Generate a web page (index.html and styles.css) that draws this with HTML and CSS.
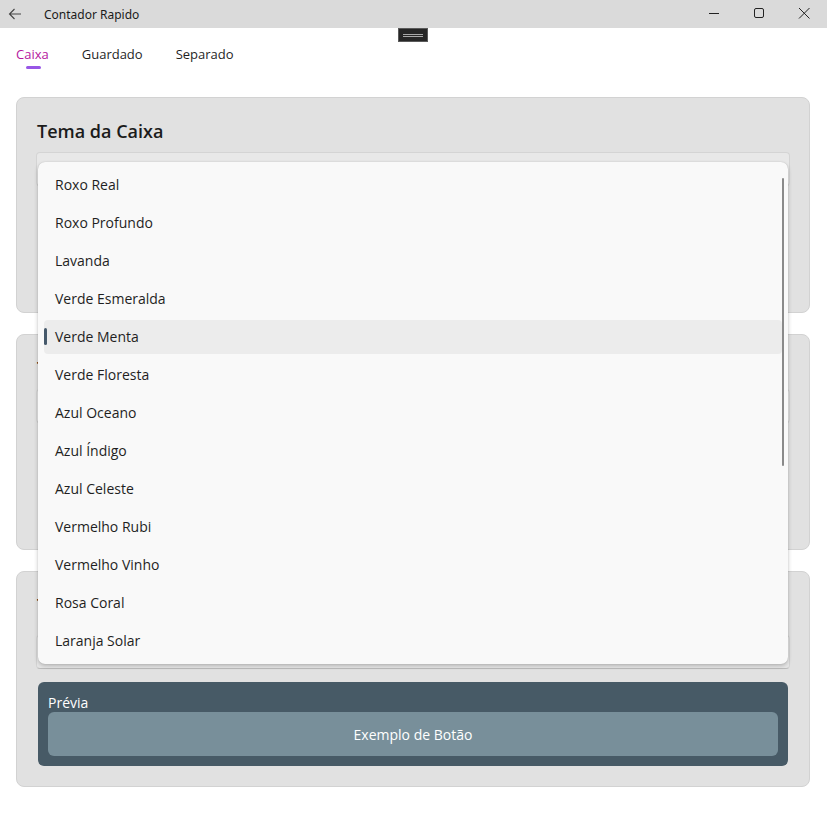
FILE: index.html
```html
<!DOCTYPE html>
<html lang="pt">
<head>
  <meta charset="UTF-8" />
  <meta name="viewport" content="width=device-width, initial-scale=1.0"/>
  <title>Contador Rapido</title>

  <link rel="stylesheet" href="styles.css">
</head>

<body>
  <div class="titlebar">
    <svg class="back" width="16" height="16" viewBox="0 0 16 16">
      <path d="M14 8H2.5M7.5 3L2.5 8l5 5" fill="none" stroke="#444" stroke-width="1.1"/>
    </svg>
    <span class="app-title">Contador Rapido</span>
    <div class="window-buttons">
      <svg width="46" height="28" viewBox="0 0 46 28">
        <path d="M18 13.5h10" stroke="#222" stroke-width="1"/>
      </svg>
      <svg width="46" height="28" viewBox="0 0 46 28">
        <rect x="18.5" y="8.5" width="9" height="9" rx="1.5" fill="none" stroke="#222" stroke-width="1"/>
      </svg>
      <svg width="46" height="28" viewBox="0 0 46 28">
        <path d="M18 8l10.5 10.5M28.5 8L18 18.5" stroke="#222" stroke-width="1"/>
      </svg>
    </div>
    <div class="handle"><span></span><span></span></div>
  </div>

  <div class="tabs">
    <div class="tab active">Caixa</div>
    <div class="tab">Guardado</div>
    <div class="tab">Separado</div>
  </div>

  <div class="content">
    <div class="card">
      <h2>Tema da Caixa</h2>
      <div class="combo"></div>
    </div>

    <div class="card">
      <h2>Tema do Guardado</h2>
      <div class="combo"></div>
    </div>

    <div class="card">
      <h2>Tema do Separado</h2>
      <div class="combo"></div>
      <div class="preview">
        <div class="preview-label">Prévia</div>
        <div class="preview-button">Exemplo de Botão</div>
      </div>
    </div>
  </div>

  <div class="dropdown">
    <div class="option">Roxo Real</div>
    <div class="option">Roxo Profundo</div>
    <div class="option">Lavanda</div>
    <div class="option">Verde Esmeralda</div>
    <div class="option selected">Verde Menta</div>
    <div class="option">Verde Floresta</div>
    <div class="option">Azul Oceano</div>
    <div class="option">Azul Índigo</div>
    <div class="option">Azul Celeste</div>
    <div class="option">Vermelho Rubi</div>
    <div class="option">Vermelho Vinho</div>
    <div class="option">Rosa Coral</div>
    <div class="option">Laranja Solar</div>
    <div class="scrollbar"></div>
  </div>
</body>
</html>
```

FILE: styles.css
```css
body {
  font-family: "Open Sans", "Noto Sans", sans-serif;
  margin: 0;
  padding: 0;
  color: #1b1b1b;
  background: #fff;
  width: 827px;
  height: 827px;
  overflow: hidden;
  position: relative;
}

.titlebar {
  height: 28px;
  background: #dadada;
  display: flex;
  align-items: center;
  position: relative;
}

.back {
  margin-left: 7px;
}

.app-title {
  font-family: "Noto Sans", sans-serif;
  font-size: 12px;
  margin-left: 21px;
  color: #1a1a1a;
}

.window-buttons {
  margin-left: auto;
  display: flex;
}

.window-buttons svg {
  display: block;
  margin-left: -1px;
}

.handle {
  position: absolute;
  left: 398px;
  top: 28px;
  width: 28px;
  height: 12px;
  background: #262626;
  border: 1px solid #5a5a5a;
  display: flex;
  flex-direction: column;
  justify-content: center;
  gap: 1px;
  align-items: center;
}

.handle span {
  display: block;
  width: 20px;
  height: 1px;
  background: #a8a8a8;
}

.tabs {
  display: flex;
  gap: 33px;
  padding: 17px 16px 0;
  height: 53px;
  box-sizing: border-box;
}

.tab {
  font-size: 13px;
  color: #1f1f1f;
  position: relative;
  height: 19px;
}

.tab.active {
  color: #b5179e;
}

.tab.active::after {
  content: "";
  position: absolute;
  left: 10px;
  width: 15px;
  top: 21px;
  height: 3px;
  border-radius: 2px;
  background: #9856e6;
}

.content {
  padding: 16px 17px 0 16px;
  display: flex;
  flex-direction: column;
  gap: 21px;
}

.card {
  height: 216px;
  box-sizing: border-box;
  background: #e1e1e1;
  border: 1px solid #d2d2d2;
  border-radius: 8px;
  padding: 21px 20px 0 20px;
}

.card h2 {
  font-size: 18px;
  font-weight: 600;
  margin: 0 0 9px;
  line-height: 24px;
}

.combo {
  height: 32px;
  background: #e8e8e8;
  border: 1px solid #d4d4d4;
  border-bottom-color: #bcbcbc;
  border-radius: 4px;
  margin-left: -1px;
  margin-right: -1px;
}

.card:last-child .combo {
  margin-top: 18px;
}

.preview {
  margin: 13px 1px 0;
  height: 84px;
  box-sizing: border-box;
  background: #475a66;
  border-radius: 6px;
  padding: 10px 10px 0;
  color: #fff;
}

.preview-label {
  font-size: 14px;
  line-height: 20px;
  padding-top: 1px;
  margin-bottom: -1px;
}

.preview-button {
  height: 44px;
  background: #788f9a;
  border-radius: 6px;
  display: flex;
  align-items: center;
  justify-content: center;
  font-size: 14px;
}

.dropdown {
  position: absolute;
  left: 38px;
  top: 162px;
  width: 750px;
  height: 502px;
  box-sizing: border-box;
  padding: 4px 0;
  background: #f9f9f9;
  border-radius: 7px;
  box-shadow: 0 2px 4px rgba(0, 0, 0, 0.22), 0 0 1px rgba(0, 0, 0, 0.2);
}

.option {
  height: 38px;
  box-sizing: border-box;
  padding-bottom: 2px;
  display: flex;
  align-items: center;
  padding-left: 17px;
  font-size: 14px;
  color: #1f1f1f;
  position: relative;
  isolation: isolate;
}

.option.selected::before {
  content: "";
  position: absolute;
  left: 6px;
  right: 6px;
  top: 2px;
  bottom: 2px;
  background: #ececec;
  border-radius: 4px;
  z-index: -1;
}

.option.selected::after {
  content: "";
  position: absolute;
  left: 6px;
  top: 10px;
  width: 3px;
  height: 17px;
  border-radius: 2px;
  background: #46596b;
}

.scrollbar {
  position: absolute;
  right: 4px;
  top: 16px;
  width: 2px;
  height: 288px;
  border-radius: 1px;
  background: #8a8a8a;
}
```
